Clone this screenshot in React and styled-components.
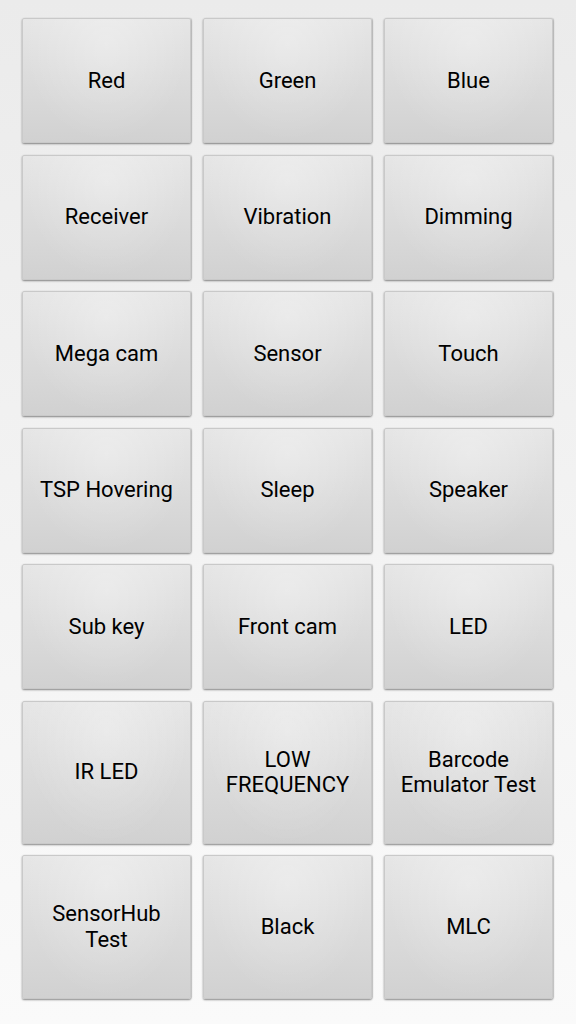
import React from "react";
import styled, { createGlobalStyle } from "styled-components";

const GlobalStyle = createGlobalStyle`
  html, body {
    margin: 0;
    padding: 0;
  }
  body {
    font-family: Roboto, "Noto Sans", sans-serif;
    background: linear-gradient(#ebebeb, #fafafa);
    min-height: 1024px;
  }
`;

const tests = [
  "Red", "Green", "Blue",
  "Receiver", "Vibration", "Dimming",
  "Mega cam", "Sensor", "Touch",
  "TSP Hovering", "Sleep", "Speaker",
  "Sub key", "Front cam", "LED",
  "IR LED", "LOW FREQUENCY", "Barcode Emulator Test",
  "SensorHub Test", "Black", "MLC",
];

export default function App() {
  return (
    <>
      <GlobalStyle />
      <Screen>
        <Grid>
          {tests.map((name) => (
            <TestButton key={name}>
              <Label>{name}</Label>
            </TestButton>
          ))}
        </Grid>
      </Screen>
    </>
  );
}

const Screen = styled.div`
  width: 576px;
  min-height: 1024px;
  box-sizing: border-box;
  padding: 18px 23px 0 22px;
`;

const Grid = styled.div`
  display: grid;
  grid-template-columns: repeat(3, 169px);
  column-gap: 12px;
  row-gap: 11.5px;
`;

const TestButton = styled.button`
  box-sizing: border-box;
  min-height: 125px;
  padding: 45px 6px;
  display: flex;
  align-items: center;
  justify-content: center;
  border: 1px solid #c9c9c9;
  border-radius: 2px;
  background:
    radial-gradient(ellipse at 50% 20%, rgba(255, 255, 255, 0.3), rgba(255, 255, 255, 0) 70%),
    linear-gradient(#e6e6e6, #d1d1d1);
  box-shadow: 0 1px 2px rgba(0, 0, 0, 0.45), 1px 0 1px rgba(0, 0, 0, 0.12);
  font-family: Roboto, "Noto Sans", sans-serif;
  font-size: 22px;
  color: #000;
  cursor: pointer;
`;

const Label = styled.span`
  display: block;
  text-align: center;
  line-height: 1.17;
`;
